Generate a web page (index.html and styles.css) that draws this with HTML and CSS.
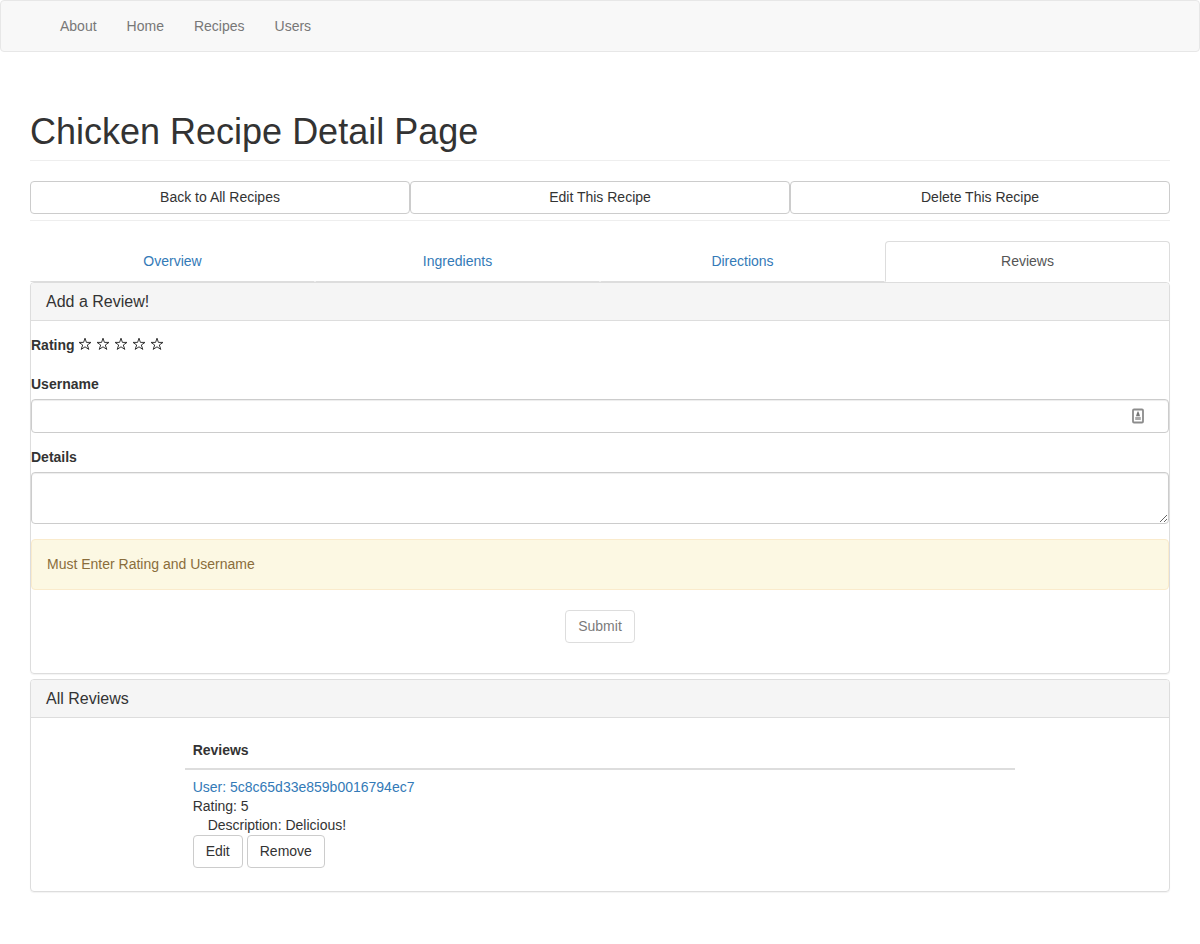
FILE: index.html
```html
<!DOCTYPE html>
<html lang="en">
<head>
<meta charset="utf-8">
<title>Chicken Recipe Detail Page</title>
<meta name="viewport" content="width=device-width, initial-scale=1">
<link rel="stylesheet" href="styles.css">
</head>
<body>
<svg class="sprite" aria-hidden="true">
  <symbol id="star" viewBox="0 0 14 14">
    <path d="M7 1.2 8.4 5.4H13L9.3 8 10.8 12.4 7 9.8 3.2 12.4 4.7 8 1 5.4H5.6Z" fill="none" stroke="currentColor" stroke-width="1"/>
  </symbol>
</svg>
<nav class="navbar">
  <a href="#">About</a>
  <a href="#">Home</a>
  <a href="#">Recipes</a>
  <a href="#">Users</a>
</nav>
<main class="container">
  <h1 class="page-title">Chicken Recipe Detail Page</h1>
  <div class="actions">
    <button class="btn" type="button">Back to All Recipes</button>
    <button class="btn" type="button">Edit This Recipe</button>
    <button class="btn" type="button">Delete This Recipe</button>
  </div>
  <nav class="tabs">
    <a class="tab" href="#">Overview</a>
    <a class="tab" href="#">Ingredients</a>
    <a class="tab" href="#">Directions</a>
    <a class="tab active" href="#" aria-current="page">Reviews</a>
  </nav>
  <section class="panel">
    <h2 class="panel-title">Add a Review!</h2>
    <form class="review-form">
      <div class="rating" role="group" aria-labelledby="rating-label">
        <span class="label" id="rating-label">Rating</span>
        <div class="stars">
          <button class="star" type="button" aria-label="1 star"><svg><use href="#star"/></svg></button>
          <button class="star" type="button" aria-label="2 stars"><svg><use href="#star"/></svg></button>
          <button class="star" type="button" aria-label="3 stars"><svg><use href="#star"/></svg></button>
          <button class="star" type="button" aria-label="4 stars"><svg><use href="#star"/></svg></button>
          <button class="star" type="button" aria-label="5 stars"><svg><use href="#star"/></svg></button>
        </div>
      </div>
      <div class="field">
        <label class="label" for="username">Username</label>
        <div class="input-wrap">
          <input class="control" id="username" type="text">
          <svg class="autofill" viewBox="0 0 12 16" aria-hidden="true">
            <rect x="1" y="1.5" width="10" height="13" rx="1" fill="#fff" stroke="#8c8c8c" stroke-width="1.8"/>
            <path d="M6 3 7 5 8 8.2H4L5 5Z" fill="#777"/>
            <path d="M3.2 9h5.6v3H3.2z" fill="#aaa"/>
          </svg>
        </div>
      </div>
      <div class="field">
        <label class="label" for="details">Details</label>
        <textarea class="control details" id="details"></textarea>
      </div>
      <div class="alert" role="alert">Must Enter Rating and Username</div>
      <button class="btn submit" type="submit" disabled>Submit</button>
    </form>
  </section>
  <section class="panel">
    <h2 class="panel-title">All Reviews</h2>
    <div class="reviews">
      <table class="table">
        <thead><tr><th scope="col">Reviews</th></tr></thead>
        <tbody>
          <tr><td>
            <a href="#">User: 5c8c65d33e859b0016794ec7</a>
            <div>Rating: 5</div>
            <div class="description">Description: Delicious!</div>
            <div class="row-actions">
              <button class="btn" type="button">Edit</button>
              <button class="btn" type="button">Remove</button>
            </div>
          </td></tr>
        </tbody>
      </table>
    </div>
  </section>
</main>
</body>
</html>
```

FILE: styles.css
```css
* { box-sizing: border-box; }

body {
  margin: 0;
  background: #fff;
  color: #333;
  font: 14px/19px "Liberation Sans", Arial, sans-serif;
}

a { color: #337ab7; text-decoration: none; }
button, input, textarea { font: inherit; }

.sprite { display: none; }

.navbar {
  display: flex;
  padding: 0 44px;
  background: #f8f8f8;
  border: 1px solid #e7e7e7;
  border-radius: 4px;
}
.navbar a { padding: 15px; line-height: 20px; color: #777; }

.container { padding: 60px 30px 52px; }

.page-title {
  margin: 0 0 20px;
  padding-bottom: 8px;
  border-bottom: 1px solid #eee;
  font-size: 36px;
  font-weight: 400;
  line-height: 40px;
}

.btn {
  padding: 6px 12px;
  color: #333;
  background: #fff;
  border: 1px solid #ccc;
  border-radius: 4px;
  line-height: 19px;
  cursor: pointer;
}
.btn:disabled { opacity: .65; cursor: not-allowed; }

.actions {
  display: flex;
  padding-bottom: 6px;
  margin-bottom: 20px;
  border-bottom: 1px solid #eee;
}
.actions .btn { flex: 1; }

.tabs { display: flex; }
.tab {
  flex: 1;
  padding: 10px 15px;
  border: 1px solid transparent;
  border-bottom-color: #ddd;
  border-radius: 4px 4px 0 0;
  text-align: center;
}
.tab.active { color: #555; border-color: #ddd; border-bottom-color: #fff; }

.panel {
  margin-bottom: 5px;
  border: 1px solid #ddd;
  border-radius: 4px;
  box-shadow: 0 1px 1px rgba(0, 0, 0, .05);
}
.panel-title {
  margin: 0;
  padding: 10px 15px;
  background: #f5f5f5;
  border-bottom: 1px solid #ddd;
  border-radius: 3px 3px 0 0;
  font-size: 16px;
  font-weight: 400;
  line-height: 17px;
}

.review-form { display: flex; flex-direction: column; padding: 15px 0 30px; }
.label { font-weight: 700; }
.rating { display: flex; gap: 3px; margin-bottom: 20px; }
.stars { display: flex; gap: 4px; }
.star { display: flex; padding: 1px 0 0; background: none; border: 0; color: #333; cursor: pointer; }
.star svg { width: 14px; height: 14px; }

.field { display: flex; flex-direction: column; gap: 5px; margin-bottom: 15px; }
.input-wrap { position: relative; }
.control {
  display: block;
  width: 100%;
  height: 34px;
  padding: 6px 12px;
  color: #555;
  background: #fff;
  border: 1px solid #ccc;
  border-radius: 4px;
  box-shadow: inset 0 1px 1px rgba(0, 0, 0, .075);
}
.details { height: 52px; resize: vertical; }
.autofill { position: absolute; top: 9px; right: 25px; width: 12px; height: 16px; }

.alert {
  margin-bottom: 20px;
  padding: 15px;
  color: #8a6d3b;
  background: #fcf8e3;
  border: 1px solid #faebcc;
  border-radius: 4px;
}
.submit { align-self: center; }

.reviews { padding: 15px 0; }
.table { width: 73%; margin: 0 auto; border-collapse: collapse; }
.table th, .table td { padding: 8px; text-align: left; }
.table th { border-bottom: 2px solid #ddd; }
.description { padding-left: 15px; }
.row-actions { display: flex; gap: 4px; }
```
